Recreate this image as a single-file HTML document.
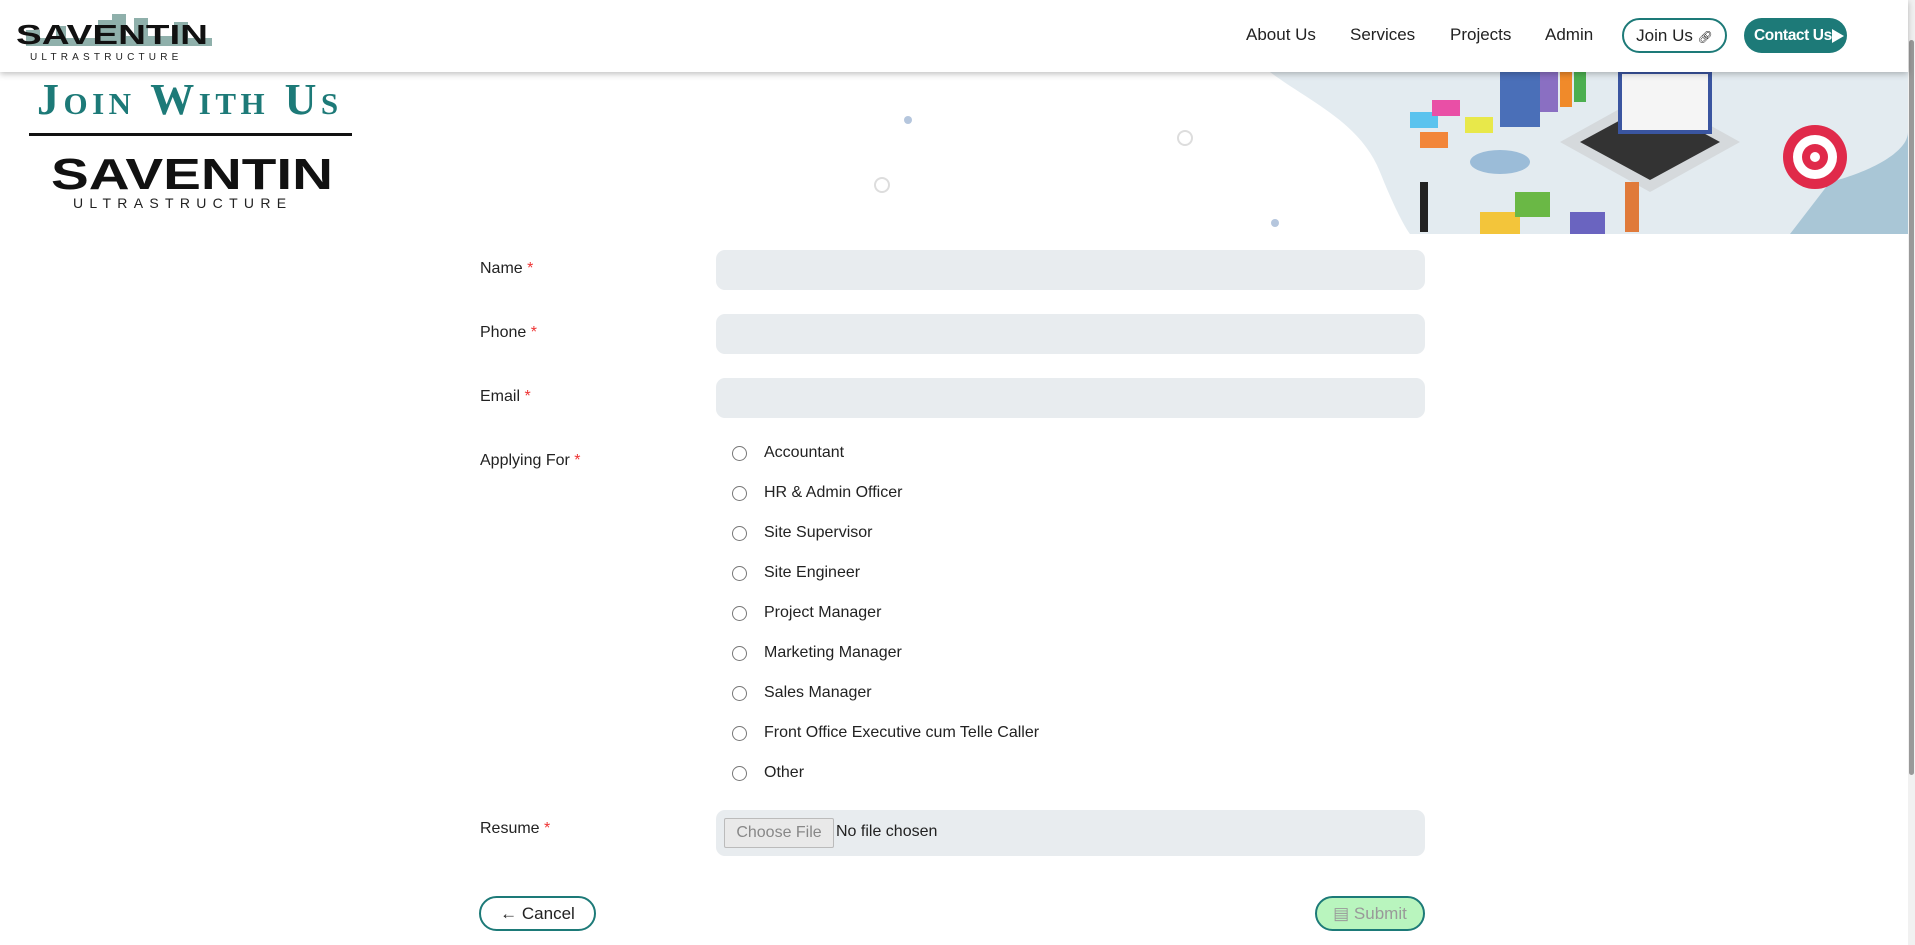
<!DOCTYPE html>
<html><head><meta charset="utf-8"><style>
*{box-sizing:border-box;margin:0;padding:0}
body{width:1915px;height:945px;overflow:hidden;background:#fff;font-family:"Liberation Sans",sans-serif;color:#212529;position:relative}
.hdr{position:absolute;left:0;top:0;width:1908px;height:72px;background:#fff;box-shadow:0 2px 6px rgba(0,0,0,.25);z-index:5}
.nav{position:absolute;top:25px;font-size:17px;color:#222}
.btn1{position:absolute;left:1622px;top:18px;width:105px;height:35px;border:2px solid #1d7a78;border-radius:18px;font-size:17px;line-height:31px;text-align:center;color:#222}
.btn2{position:absolute;left:1744px;top:18px;width:103px;height:35px;background:#1d7a78;border-radius:18px;font-size:15.5px;letter-spacing:-0.4px;font-weight:bold;line-height:35px;color:#fff;padding-left:10px}
.sb{position:absolute;right:0;top:0;width:7px;height:945px;background:#f1f1f1}
.sb div{position:absolute;left:1px;top:40px;width:5px;height:735px;background:#999;border-radius:3px}
.lbl{position:absolute;left:480px;font-size:16px;color:#222}
.lbl span{color:#e33}
.inp{position:absolute;left:716px;width:709px;height:40px;background:#e8ecef;border-radius:9px}
.r{position:absolute;left:732px;font-size:16px;color:#222}
.r i{position:absolute;left:0;top:2px;width:15px;height:15px;border:1px solid #777;border-radius:50%}
.r b{font-weight:normal;position:absolute;left:32px;top:0;white-space:nowrap}
</style></head><body>
<div class="hdr">
 <svg style="position:absolute;left:6px;top:8px" width="206" height="56">
  <path d="M0 38 L20 38 L20 22 L34 22 L34 30 L50 30 L50 18 L60 18 L60 30 L92 30 L92 12 L106 12 L106 6 L120 6 L120 28 L128 28 L128 10 L142 10 L142 28 L168 28 L168 14 L182 14 L182 30 L206 30 L206 38 Z" fill="#8fb0ab"/>
  <text x="10" y="36" font-family="Liberation Sans" font-weight="bold" font-size="28" fill="#111" textLength="192" lengthAdjust="spacingAndGlyphs">SAVENTIN</text>
  <text x="24" y="52" font-size="10" fill="#222" letter-spacing="4.2">ULTRASTRUCTURE</text>
 </svg>
 <div class="nav" style="left:1246px">About Us</div>
 <div class="nav" style="left:1350px">Services</div>
 <div class="nav" style="left:1450px">Projects</div>
 <div class="nav" style="left:1545px">Admin</div>
 <div class="btn1">Join Us <span style="font-size:12px">&#x1F517;&#xFE0E;</span></div>
 <div class="btn2">Contact Us<svg style="position:absolute;left:88px;top:11px" width="12" height="14"><path d="M0 0 L12 7 L0 14 Z" fill="#fff"/></svg></div>
</div>
<div class="sb"><div></div></div>
<svg style="position:absolute;left:1270px;top:72px" width="638" height="162">
 <path d="M0 0 C40 30 90 50 110 100 C130 150 140 162 140 162 L638 162 L638 0 Z" fill="#e3ebf0"/>
 <path d="M560 110 C600 100 638 80 638 60 L638 162 L520 162 Z" fill="#a9c6d6"/>
 <rect x="230" y="0" width="40" height="55" fill="#4a6fb8"/><rect x="270" y="0" width="18" height="40" fill="#8a6fc2"/><rect x="290" y="0" width="12" height="35" fill="#f08a2a"/><rect x="304" y="0" width="12" height="30" fill="#4caf50"/>
 <path d="M290 70 L380 20 L470 70 L380 120 Z" fill="#d5d9dc"/><path d="M310 70 L380 32 L450 70 L380 108 Z" fill="#333"/>
 <rect x="350" y="0" width="90" height="60" fill="#f5f5f5" stroke="#3a55a0" stroke-width="4"/>
 <rect x="140" y="40" width="28" height="16" fill="#5bc3ee"/><rect x="162" y="28" width="28" height="16" fill="#e94fa6"/><rect x="195" y="45" width="28" height="16" fill="#e8e84a"/><rect x="150" y="60" width="28" height="16" fill="#f2863a"/>
 <ellipse cx="230" cy="90" rx="30" ry="12" fill="#9bbcd8"/>
 <path d="M210 140 h40 v22 h-40z" fill="#f3c53a"/><path d="M245 120 h35 v25 h-35z" fill="#6ab845"/><path d="M300 140 h35 v22 h-35z" fill="#6a64c0"/>
 <circle cx="545" cy="85" r="32" fill="#e02a4a"/><circle cx="545" cy="85" r="22" fill="#fff"/><circle cx="545" cy="85" r="13" fill="#e02a4a"/><circle cx="545" cy="85" r="5" fill="#fff"/>
 <rect x="150" y="110" width="8" height="50" fill="#222"/><rect x="355" y="110" width="14" height="50" fill="#e07a3a"/>
</svg>
<svg style="position:absolute;left:870px;top:110px" width="420" height="130"><circle cx="38" cy="10" r="4" fill="#b5c6dd"/><circle cx="315" cy="28" r="7" fill="none" stroke="#ddd" stroke-width="2"/><circle cx="12" cy="75" r="7" fill="none" stroke="#ddd" stroke-width="2"/><circle cx="405" cy="113" r="4" fill="#b5c6dd"/></svg>
<div style="position:absolute;left:37px;top:74px;font-family:'Liberation Serif',serif;font-size:44px;color:#1d7a78;font-variant:small-caps;letter-spacing:4.5px;font-weight:bold;white-space:nowrap">Join With Us</div>
<div style="position:absolute;left:29px;top:133px;width:323px;height:3px;background:#111"></div>
<svg style="position:absolute;left:51px;top:150px" width="290" height="64">
 <text x="0" y="39" font-family="Liberation Sans" font-weight="bold" font-size="44" fill="#111" textLength="282" lengthAdjust="spacingAndGlyphs">SAVENTIN</text>
 <text x="22" y="58" font-size="14" fill="#222" letter-spacing="6.3">ULTRASTRUCTURE</text>
</svg>

<div class="lbl" style="top:260px">Name <span>*</span></div><div class="inp" style="top:250px"></div>
<div class="lbl" style="top:324px">Phone <span>*</span></div><div class="inp" style="top:314px"></div>
<div class="lbl" style="top:388px">Email <span>*</span></div><div class="inp" style="top:378px"></div>
<div class="lbl" style="top:452px">Applying For <span>*</span></div>
<div class="r" style="top:444px"><i></i><b>Accountant</b></div>
<div class="r" style="top:484px"><i></i><b>HR &amp; Admin Officer</b></div>
<div class="r" style="top:524px"><i></i><b>Site Supervisor</b></div>
<div class="r" style="top:564px"><i></i><b>Site Engineer</b></div>
<div class="r" style="top:604px"><i></i><b>Project Manager</b></div>
<div class="r" style="top:644px"><i></i><b>Marketing Manager</b></div>
<div class="r" style="top:684px"><i></i><b>Sales Manager</b></div>
<div class="r" style="top:724px"><i></i><b>Front Office Executive cum Telle Caller</b></div>
<div class="r" style="top:764px"><i></i><b>Other</b></div>
<div class="lbl" style="top:820px">Resume <span>*</span></div>
<div class="inp" style="top:810px;height:46px"><div style="position:absolute;left:8px;top:8px;height:30px;border:1px solid #bbb;border-radius:2px;background:#e9e9e9;color:#888;font-size:16px;line-height:28px;text-align:center;width:110px">Choose File</div><div style="position:absolute;left:120px;top:13px;font-size:16px;color:#222">No file chosen</div></div>
<div style="position:absolute;left:479px;top:896px;width:117px;height:35px;border:2px solid #1d7a78;border-radius:18px;font-size:17px;line-height:31px;text-align:center;color:#222">← Cancel</div>
<div style="position:absolute;left:1315px;top:896px;width:110px;height:35px;border:2px solid #1d7a78;border-radius:18px;background:#b9f5be;font-size:17px;line-height:31px;text-align:center;color:#999">▤ Submit</div>
</body></html>
